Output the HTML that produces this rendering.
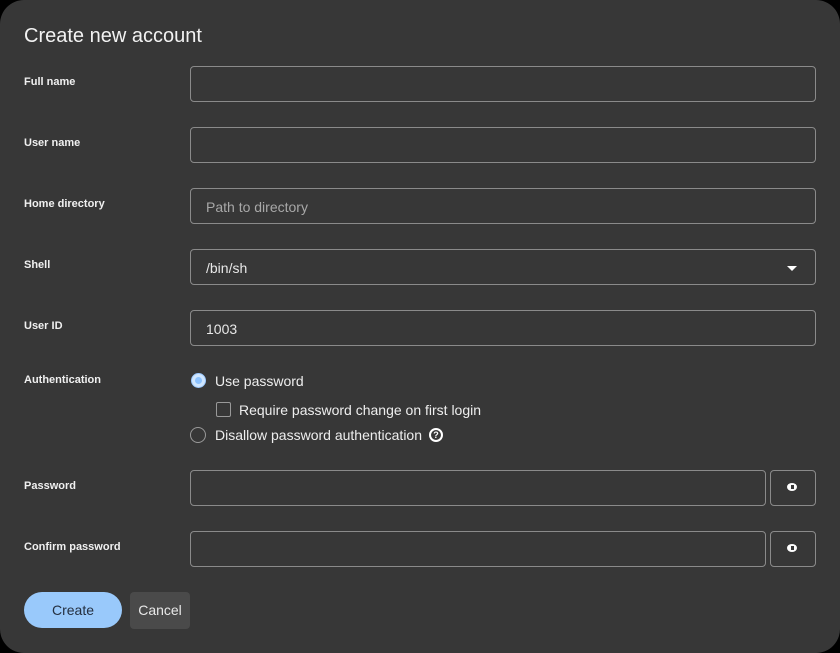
<!DOCTYPE html>
<html><head><style>
html,body{margin:0;padding:0;background:#000;}
body{width:840px;height:653px;position:relative;overflow:hidden;font-family:"Liberation Sans",sans-serif;color:#eee;}
.dlg{position:absolute;left:0;top:0;width:840px;height:653px;background:#373737;border-radius:24px;}
.t{position:absolute;left:24px;top:25px;font-size:20px;color:#f2f2f2;}
.l{position:absolute;left:24px;font-size:11px;font-weight:bold;color:#f0f0f0;}
.in{position:absolute;left:190px;width:626px;height:36px;border:1px solid #8a8a8a;border-radius:4px;box-sizing:border-box;font-size:14px;line-height:36px;padding-left:15px;color:#e8e8e8;}
.eye{position:absolute;left:770px;width:46px;height:36px;border:1px solid #8a8a8a;border-radius:4px;box-sizing:border-box;}
.eye::after{content:"";position:absolute;left:16px;top:12px;width:10px;height:8px;border-radius:50%;background:#fff;}
.eye::before{content:"";position:absolute;left:20px;top:14px;width:3px;height:4px;background:#373737;z-index:2;}
.tx{position:absolute;font-size:14px;color:#eee;}
</style></head><body>
<div class="dlg">
<div class="t">Create new account</div>
<div class="l" style="top:76px">Full name</div>
<div class="in" style="top:66px"></div>
<div class="l" style="top:137px">User name</div>
<div class="in" style="top:127px"></div>
<div class="l" style="top:198px">Home directory</div>
<div class="in" style="top:188px;color:#a8a8a8">Path to directory</div>
<div class="l" style="top:259px">Shell</div>
<div class="in" style="top:249px">/bin/sh<span style="position:absolute;right:18px;top:16px;width:0;height:0;border-left:5px solid transparent;border-right:5px solid transparent;border-top:5px solid #fff"></span></div>
<div class="l" style="top:320px">User ID</div>
<div class="in" style="top:310px">1003</div>
<div class="l" style="top:374px">Authentication</div>
<div style="position:absolute;left:191px;top:373px;width:15px;height:15px;border-radius:50%;background:#cfe6ff;border:1px solid #9cc9ff;box-sizing:border-box"><div style="position:absolute;left:3px;top:3px;width:7px;height:7px;border-radius:50%;background:#8cc2ff"></div></div>
<div class="tx" style="left:215px;top:373px">Use password</div>
<div style="position:absolute;left:216px;top:402px;width:15px;height:15px;border:1px solid #999;border-radius:2px;box-sizing:border-box"></div>
<div class="tx" style="left:239px;top:402px">Require password change on first login</div>
<div style="position:absolute;left:190px;top:427px;width:16px;height:16px;border:1px solid #999;border-radius:50%;box-sizing:border-box"></div>
<div class="tx" style="left:215px;top:427px">Disallow password authentication</div>
<div style="position:absolute;left:429px;top:428px;width:14px;height:14px;border:2px solid #fff;border-radius:50%;box-sizing:border-box;font-size:9px;font-weight:bold;text-align:center;line-height:10px;color:#fff">?</div>
<div class="l" style="top:480px">Password</div>
<div class="in" style="top:470px;width:576px"></div>
<div class="eye" style="top:470px"></div>
<div class="l" style="top:541px">Confirm password</div>
<div class="in" style="top:531px;width:576px"></div>
<div class="eye" style="top:531px"></div>
<div style="position:absolute;left:24px;top:592px;width:98px;height:36px;border-radius:18px;background:#99c9fb;color:#253040;font-size:14px;text-align:center;line-height:36px">Create</div>
<div style="position:absolute;left:130px;top:592px;width:60px;height:37px;border-radius:4px;background:#4a4a4a;color:#e8e8e8;font-size:14px;text-align:center;line-height:37px">Cancel</div>
</div>
</body></html>
